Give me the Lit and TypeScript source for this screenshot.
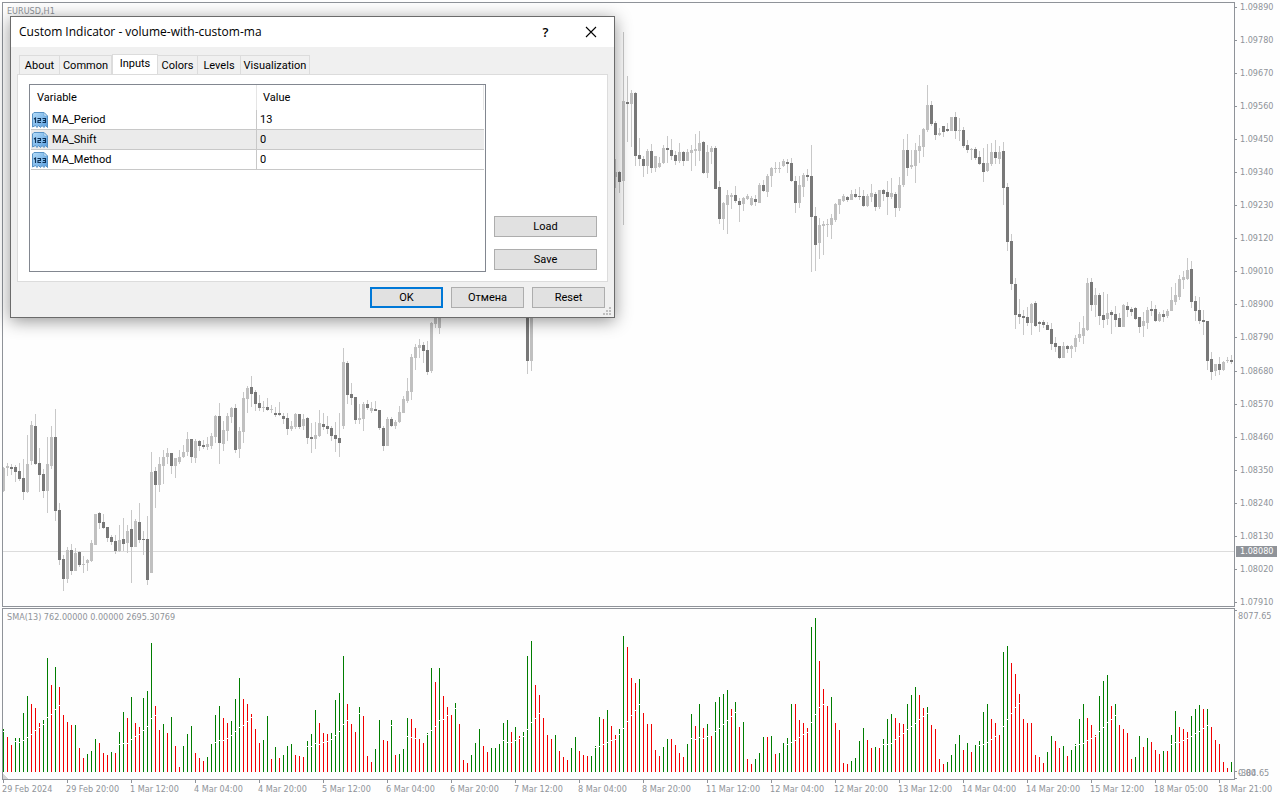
import { LitElement, html, svg, css } from "lit";
import { customElement, state } from "lit/decorators.js";
import { classMap } from "lit/directives/class-map.js";

// Horizontal distance between two bars.
const STEP = 4;

// One candle per item: high, body top, body bottom, low (pane rows); u = up, d = down.
const CANDLE_RUNS: { from: number; data: string }[] = [
  {
    from: 0,
    data: `467,468,491,492u 463,466,468,476u 464,467,469,475d 465,467,472,482d 463,471,479,481d 459,478,492,500d
435,464,492,493u 421,425,461,465u 414,426,464,465d 448,463,475,492d 469,474,491,498d 437,464,491,513u
426,437,466,469u 409,437,511,521d 503,510,560,565d 555,559,579,591d 547,550,579,583u 544,550,571,575d
548,553,571,571u 551,552,565,567d 556,564,565,573u 559,560,563,571u 540,543,561,562u 514,514,545,545u
512,513,523,529d 514,522,528,529d 527,527,538,542d 535,537,542,545d 535,541,551,554d 525,540,551,552u
518,539,544,551d 525,531,543,553u 510,529,547,583d 519,521,547,547u 503,522,540,543d 531,539,540,555d
516,539,580,585d 452,472,573,573u 467,471,485,508d 457,464,485,492u 450,457,466,484u 448,453,457,464u
453,453,466,474d 458,458,466,478u 450,457,462,464u 445,452,457,458u 432,439,452,456u 439,439,457,463d
439,441,458,463u 440,441,446,451d 440,445,447,449d 437,444,447,450u 433,436,446,449u 415,416,437,443u
403,416,443,464d 421,430,444,451u 413,416,431,441u 407,408,417,423u 404,408,450,453d 427,431,449,458u
392,398,432,443u 386,388,399,413u 376,387,394,407d 390,392,404,411d 395,403,408,411d 401,407,408,412u
398,407,410,411d 405,409,410,413u 407,413,415,417d 402,413,415,416d 413,416,419,424d 413,418,429,435d
421,426,429,431u 413,414,427,429u 414,414,427,429d 414,419,426,430u 417,418,438,444d 423,437,439,453d
422,435,439,449u 410,423,436,437u 413,424,427,430d 416,426,429,434d 426,428,436,441d 422,435,439,452d
413,438,443,457d 348,362,426,429u 361,363,395,404d 383,394,398,405d 397,397,420,424d 404,418,420,424u
402,404,419,431u 400,404,408,410d 402,408,411,413u 401,409,411,411d 410,410,428,430d 426,428,446,451d
417,419,446,446u 417,419,426,427d 420,422,426,429u 406,412,422,423u 396,399,413,413u 378,391,401,403u
354,357,392,400u 344,347,358,370u 339,345,348,358u 342,345,351,363d 341,350,372,375d 322,323,371,373u
300,305,324,328u 300,305,328,334u`,
  },
  { from: 131, data: `290,295,361,374d 290,295,361,371u` },
  {
    from: 153,
    data: `159,172,177,188u 171,172,182,193d 32,101,181,225u 76,102,104,142d 90,93,104,147u 92,93,156,166d
138,155,159,166d 156,159,166,177d 149,151,166,174u 144,151,168,173d 156,156,168,172u 157,163,167,168u
145,148,163,164u 136,148,150,163d 139,150,156,160d 151,155,161,165d 143,152,161,163u 151,152,161,166d
149,152,161,161u 145,150,153,171u 134,149,151,166u 131,143,151,161u 141,142,173,174d 145,152,173,178u
146,148,152,164u 146,148,189,189d 181,187,219,224d 202,203,219,230u 190,195,205,234u 193,195,197,209u
186,195,201,203d 198,201,205,222d 197,198,204,211u 194,196,199,200u 196,198,205,206u 195,199,202,206d
183,185,203,203u 180,185,191,192d 174,176,192,197u 167,168,176,187u 162,168,169,173u 162,168,169,173u
159,161,166,167u 159,162,164,173d 158,163,181,182d 176,181,203,213d 176,185,203,208u 173,175,187,197u
169,175,177,181d 145,176,217,272d 207,216,245,271d 218,225,243,259u 221,224,226,255u 219,224,225,237u
214,218,225,239u 203,204,220,222u 199,199,205,214u 194,196,201,202u 196,197,200,202d 190,194,200,200u
189,194,197,198d 187,196,197,200d 190,196,206,207d 194,196,206,207u 184,193,197,202u 192,194,207,211d
190,190,207,209u 189,190,194,201d 181,192,197,215d 178,193,197,199u 192,194,208,217d 177,185,208,211u
139,150,185,187u 134,150,168,176d 150,165,167,169u 143,150,166,183u 135,146,151,163u 128,129,147,157u
85,105,130,132u 101,105,124,126d 121,123,135,140d 128,133,135,136u 126,126,132,137d 123,129,131,132d
117,117,131,131u 112,117,131,139d 118,130,131,141u 127,130,146,148d 140,145,150,153d 148,149,150,160u
147,149,158,160d 151,157,164,165d 148,163,172,182d 144,163,171,172u 143,152,164,166u 140,152,158,164d
146,152,159,164u 142,151,188,205d 183,187,242,251d 234,241,284,290d 278,284,315,329d 299,314,317,324d
310,316,318,335d 307,317,323,326d 303,304,323,335u 301,303,326,327d 321,322,324,332d 320,322,325,328d
322,325,330,330d 323,329,344,350d 337,343,347,352d 346,346,358,359d 342,346,358,358u 345,346,349,353d
345,346,349,358u 335,338,347,352u 322,334,338,342u 316,328,336,344u 278,283,330,331u 278,282,305,311d
288,295,305,317u 293,295,316,325d 292,315,320,328d 294,313,319,325u 310,312,315,334d 306,314,320,327d
313,318,327,327d 304,305,327,327u 302,306,310,317d 307,309,312,316d 307,308,319,320d 317,317,327,333d
312,321,326,337u 307,310,323,329u 301,309,311,316d 305,309,321,322d 312,314,321,322u 310,314,317,322d
309,311,316,318u 287,300,311,311u 283,295,302,305u 275,279,297,300u 271,277,280,289u 258,270,279,280u
261,269,302,308d 296,301,311,321d 297,310,321,324d 310,320,322,335d 321,321,361,370d 352,359,372,380d
364,364,371,376u 357,364,370,375d 361,362,370,371u 357,360,361,363u 355,360,362,364d`,
  },
];

// Volume histogram: height, g = rising / r = falling, then the height of the moving average cut.
const VOLUMES = `43g41 35r 27r 34g31 34g30 59g32 76g35 68r38 64r42 49r45 52g48 114g55 87r58 105g63 85r67 57r 50r 47r 47g 24r
14r 18g 21g 33g 29r 19r 17r 20g 19r 40g28 60g29 54r29 75g33 49r36 45r38 74g42 81g46 129g54 66r57 42r
48g 39r 55g 26r 5r 26g 38g 46g 19r 14r 11r 15g 28g 57g30 66g32 54r32 49r34 51g37 73g41 94g45
73r47 68r51 58r55 43r 29r 32g 56g 13r 25g 14r 17g 26g 28g 17r 16r 15r 31g26 38g26 62g29 49r28
39r30 38r31 39g33 72g37 79g41 116g48 68r52 48r 40r 65g59 56r 16r 10r 23g 52g 32r 31r 52g47 17r 18g
23g 54g36 53r35 44r34 33r 29r 39g38 104g42 90r46 104g52 76r53 65r57 57r 69g64 48r 12r 9r 17g 29g 43g
26r 20r 24g 24g 28g 49g32 52g30 40r30 45g32 36r34 40g36 116g43 131g50 87r54 77r59 54r 37r 33r 37g 21r
15r 12r 24g 35g 21r 17r 16r 16g 26g25 55g26 53r28 62g30 46r32 37r33 43g38 136g44 125r51 94r57 89r62 93g68
59r 48r 48r 22r 16r 25g 33g 33r 27r 19r 15r 28g 58g34 46r33 68g35 44r34 48g36 36r 70g41 75g44
78g48 82g52 63r56 70g60 45r 50g 13r 8r 13g 19g 35g 35r 36g 18r 19g 29g 34g28 68g30 68r32 52r35
49r38 44r40 145g50 154g58 111r65 83r68 66r 75g 49r 42r 9r 8r 11g 14g 31g 44g 32r 24r 25g 24r
33g28 53g28 58g29 54r33 49r36 48r39 68g43 77g46 85g49 77r53 64r56 65g59 47r 43r 13r 8r 10g 17g 28g 37g
22r 29g 20r 27g 31g27 60g28 68g30 53r33 49r36 37r 120g46 126g53 109r59 98r65 78r69 53r 49r 49r 17r 15r
9r 20g 36g 31r 24r 26g 16r 22g 28g27 53g28 68g29 54r32 47r34 37r36 76g41 91g45 97g50 66r53 68g57 47r
43r 39r 13r 15g 36g 25r 34g 30r 22r 18r 21g 21r 37g28 61g30 45r30 43r32 40r34 56g36 63g39 67g41
63r44 63g47 45r 32r 28r 10r 4r 10g`;

const PRICES = [
  "1.09890", "1.09780", "1.09670", "1.09560", "1.09450", "1.09340", "1.09230", "1.09120", "1.09010", "1.08900",
  "1.08790", "1.08680", "1.08570", "1.08460", "1.08350", "1.08240", "1.08130", "1.08020", "1.07910",
];

const TIMES = [
  "29 Feb 2024", "29 Feb 20:00", "1 Mar 12:00", "4 Mar 04:00", "4 Mar 20:00", "5 Mar 12:00", "6 Mar 04:00",
  "6 Mar 20:00", "7 Mar 12:00", "8 Mar 04:00", "8 Mar 20:00", "11 Mar 12:00", "12 Mar 04:00", "12 Mar 20:00",
  "13 Mar 12:00", "14 Mar 04:00", "14 Mar 20:00", "15 Mar 12:00", "18 Mar 05:00", "18 Mar 21:00",
];

@customElement("price-pane")
class PricePane extends LitElement {
  static styles = css`
    :host { display: block; overflow: hidden; }
    .plot { display: block; width: 100%; height: 100%; shape-rendering: crispEdges; }
    .wick { fill: #c8c8c8; }
    .up { fill: #c0c0c0; }
    .down { fill: #787878; }
    .bid { fill: #dcdcdc; }
  `;

  private candle(spec: string, index: number) {
    const [high, top, bottom, low] = spec.slice(0, -1).split(",").map(Number);
    const x = index * STEP;
    return svg`
      <rect class="wick" x=${x} y=${high - 3} width="1" height=${low - high}></rect>
      <rect class=${spec.endsWith("u") ? "up" : "down"} x=${x - 1} y=${top - 3} width="3" height=${bottom - top}></rect>`;
  }

  render() {
    return html`<svg class="plot" role="img" aria-label="EURUSD, H1 candles">
      <rect class="bid" x="0" y="548" width="100%" height="1"></rect>
      ${CANDLE_RUNS.map((run) => run.data.split(/\s+/).map((c, i) => this.candle(c, run.from + i)))}
    </svg>`;
  }
}

@customElement("volume-pane")
class VolumePane extends LitElement {
  static styles = css`
    :host { display: block; overflow: hidden; }
    .plot { display: block; width: 100%; height: 100%; shape-rendering: crispEdges; }
    .g { fill: #007d00; }
    .r { fill: #f00000; }
    .cut { fill: #fefefe; }
    .corner { fill: #d4d4d4; }
  `;

  private bar(spec: string, index: number) {
    const [, height, dir, cut] = /^(\d+)([gr])(\d*)$/.exec(spec)!;
    const base = 163;
    const x = index * STEP;
    return svg`
      <rect class=${dir} x=${x} y=${base - Number(height)} width="1" height=${height}></rect>
      ${cut ? svg`<rect class="cut" x=${x - 1} y=${base - Number(cut)} width="3" height="1"></rect>` : ""}`;
  }

  render() {
    return html`<svg class="plot" role="img" aria-label="Volume histogram">
      <path class="corner" d="M0 165 L5 170 H0 Z"></path>
      ${VOLUMES.split(/\s+/).map((v, i) => this.bar(v, i))}
    </svg>`;
  }
}

@customElement("indicator-dialog")
class IndicatorDialog extends LitElement {
  @state() private tab = "Inputs";

  private tabs = ["About", "Common", "Inputs", "Colors", "Levels", "Visualization"];
  private inputs = [
    { name: "MA_Period", value: "13" },
    { name: "MA_Shift", value: "0" },
    { name: "MA_Method", value: "0" },
  ];

  static styles = css`
    :host {
      display: flex; flex-direction: column; box-sizing: border-box;
      border: 1px solid #6b6b6b; background: #f0f0f0; color: #000;
      box-shadow: 0 3px 16px rgba(0, 0, 0, 0.42);
      font: 11px/16px Roboto, "Liberation Sans", sans-serif;
    }
    .title { display: flex; align-items: center; height: 30px; padding: 0 1px 0 8px; background: #fff; }
    .caption { flex: 1; margin: 0; font: 12px/16px "Open Sans", sans-serif; }
    .tool { width: 45px; height: 30px; padding: 0; border: 0; background: none; color: #000; font: 600 13px/28px "Open Sans", sans-serif; }
    .cross { display: block; margin: 0 auto; }
    .tabs { display: grid; grid-template-columns: 41px 52px 46px 40px 43px 69px; align-items: end; height: 21px; padding-left: 8px; margin-top: 7px; margin-bottom: -1px; }
    .tab { height: 19px; margin: 0 0 1px; padding: 1px 0 0; border: 1px solid #dcdcdc; border-width: 1px 1px 0 0; background: #f0f0f0; color: #000; font: inherit; white-space: nowrap; }
    .tab:first-child { border-left-width: 1px; }
    .tab.on { height: 21px; margin: 0; padding: 0 0 2px; background: #fff; border-left-width: 1px; }
    .sheet { display: grid; grid-template-columns: 1fr 103px; gap: 8px; margin: 0 6px; padding: 9px 10px 9px 11px; border: 1px solid #dcdcdc; background: #fff; height: 188px; }
    .list { border: 1px solid #828790; padding: 0 1px; }
    .grid { width: 100%; border-collapse: separate; border-spacing: 0; table-layout: fixed; }
    .name { width: 226px; box-sizing: border-box; }
    .grid th { height: 25px; padding: 0 0 0 6px; border-right: 1px solid #e5e5e5; font-weight: 400; text-align: left; }
    .grid td { height: 19px; padding: 0 0 0 3px; border-bottom: 1px solid #c8c8c8; }
    .grid td:first-child { padding-left: 1px; border-right: 1px solid #c8c8c8; }
    .grid tr:nth-child(2) td { background: #ebebeb; }
    .cell { display: flex; align-items: center; gap: 4px; }
    .side { display: flex; flex-direction: column; justify-content: flex-end; gap: 12px; padding-bottom: 2px; }
    .btn { box-sizing: border-box; height: 21px; padding: 1px 0 0; border: 1px solid #adadad; background: #e1e1e1; color: #000; font: inherit; }
    .btn.main { border: 2px solid #0078d7; }
    .foot { display: grid; grid-template-columns: repeat(3, 73px); justify-content: end; gap: 8px; padding: 5px 9px 9px; position: relative; }
    .grip { position: absolute; right: 3px; bottom: 2px; fill: #bfbfbf; }
  `;

  private icon() {
    return html`<svg width="16" height="16" viewBox="0 0 16 16" aria-hidden="true">
      <defs>
        <linearGradient id="sheet" x1="0" y1="0" x2="1" y2="1">
          <stop offset="0" stop-color="#b4dcf8"></stop>
          <stop offset="1" stop-color="#5a9fe0"></stop>
        </linearGradient>
      </defs>
      <path fill="url(#sheet)" stroke="#5791c4" d="M2 .5H12L15.500 4V15.500L13.500 13.500L12 15.500L10 13.500L8.500 15.500L6.500 13.500L5 15.500L3.500 13.500L.5 15V2Z"></path>
      <path fill="#e4f3fd" stroke="#6ba3d3" stroke-width=".7" d="M12 .7V4H15.300Z"></path>
      <path fill="none" stroke="#0c2f55" stroke-width="1.100" d="M2 7L3.500 6V11M5.500 6.500H8.500V8.500H6V10.500H9M10.500 6.500H13.500V10.500H10.500M11 8.500H13.500"></path>
    </svg>`;
  }

  render() {
    return html`
      <header class="title">
        <h1 class="caption">Custom Indicator - volume-with-custom-ma</h1>
        <button class="tool" aria-label="Help">?</button>
        <button class="tool" aria-label="Close">
          <svg class="cross" width="12" height="12" viewBox="0 0 12 12"><path fill="none" stroke="#000" stroke-width="1.100" d="M1 1L11 11M11 1L1 11"></path></svg>
        </button>
      </header>
      <div class="tabs" role="tablist">
        ${this.tabs.map(
          (t) => html`<button role="tab" aria-selected=${t === this.tab} class=${classMap({ tab: true, on: t === this.tab })} @click=${() => (this.tab = t)}>${t}</button>`
        )}
      </div>
      <section class="sheet" role="tabpanel">
        <div class="list">
          <table class="grid">
            <thead><tr><th class="name">Variable</th><th>Value</th></tr></thead>
            <tbody>
              ${this.inputs.map((r) => html`<tr><td><span class="cell">${this.icon()}${r.name}</span></td><td>${r.value}</td></tr>`)}
            </tbody>
          </table>
        </div>
        <div class="side">
          <button class="btn">Load</button>
          <button class="btn">Save</button>
        </div>
      </section>
      <footer class="foot">
        <button class="btn main">OK</button>
        <button class="btn">Отмена</button>
        <button class="btn">Reset</button>
        <svg class="grip" width="8" height="8" aria-hidden="true">
          <path d="M6 0h2v2h-2zM3 3h2v2h-2zM6 3h2v2h-2zM0 6h2v2h-2zM3 6h2v2h-2zM6 6h2v2h-2z"></path>
        </svg>
      </footer>`;
  }
}

@customElement("app-root")
class AppRoot extends LitElement {
  static styles = css`
    :host {
      display: grid; box-sizing: border-box; height: 100vh; overflow: hidden; position: relative;
      grid-template-columns: minmax(0, 1fr) 45px; grid-template-rows: minmax(0, 1fr) 172px 19px; row-gap: 1px;
      padding: 2px 0 0 2px; background: #fefefe; color: #8f9399;
      font: 9px/11px "DejaVu Sans Condensed", "DejaVu Sans", sans-serif;
    }
    .pane { display: grid; border: 1px solid #8f9399; position: relative; min-height: 0; }
    .legend { position: absolute; left: 4px; top: 3px; margin: 0; font: inherit; }
    .prices { display: grid; position: relative; min-height: 0; }
    .scale { display: flex; flex-direction: column; justify-content: space-between; margin: 0 0 -1px; padding: 0; list-style: none; }
    .mark { display: flex; align-items: center; gap: 3px; height: 11px; }
    .mark::before { content: ""; width: 2px; height: 1px; background: #8f9399; }
    .bid { position: absolute; left: 1px; top: 544px; width: 37px; padding-left: 4px; background: #8f9399; color: #fff; }
    .levels { display: grid; grid-template-rows: 14px 1fr 14px; padding: 1px 0 0 3px; align-items: center; position: relative; }
    .low { grid-area: 3 / 1; }
    .ticks { position: absolute; left: 0; top: 0; width: 2px; height: 100%; fill: #8f9399; }
    .times { grid-column: 1 / -1; display: flex; margin: -1px 0 0; padding: 0; list-style: none; }
    .time { flex: 0 0 64px; white-space: nowrap; }
    .time::before { content: ""; display: block; width: 1px; height: 3px; margin: 0 0 1px 1px; background: #8f9399; }
    .window { position: absolute; left: 10px; top: 16px; width: 605px; }
  `;

  render() {
    return html`
      <div class="pane"><price-pane></price-pane><h2 class="legend">EURUSD,H1</h2></div>
      <div class="prices">
        <ul class="scale">${PRICES.map((p) => html`<li class="mark">${p}</li>`)}</ul>
        <span class="bid">1.08080</span>
      </div>
      <div class="pane"><volume-pane></volume-pane><h2 class="legend">SMA(13) 762.00000 0.00000 2695.30769</h2></div>
      <div class="levels">
        <span>8077.65</span><span class="low">0.00</span><span class="low">-384.65</span>
        <svg class="ticks" aria-hidden="true"><path d="M0 2h2v1h-2zM0 163h2v1h-2zM0 170h2v1h-2z"></path></svg>
      </div>
      <ul class="times">${TIMES.map((t) => html`<li class="time">${t}</li>`)}</ul>
      <indicator-dialog class="window" role="dialog" aria-label="Custom Indicator"></indicator-dialog>`;
  }
}
